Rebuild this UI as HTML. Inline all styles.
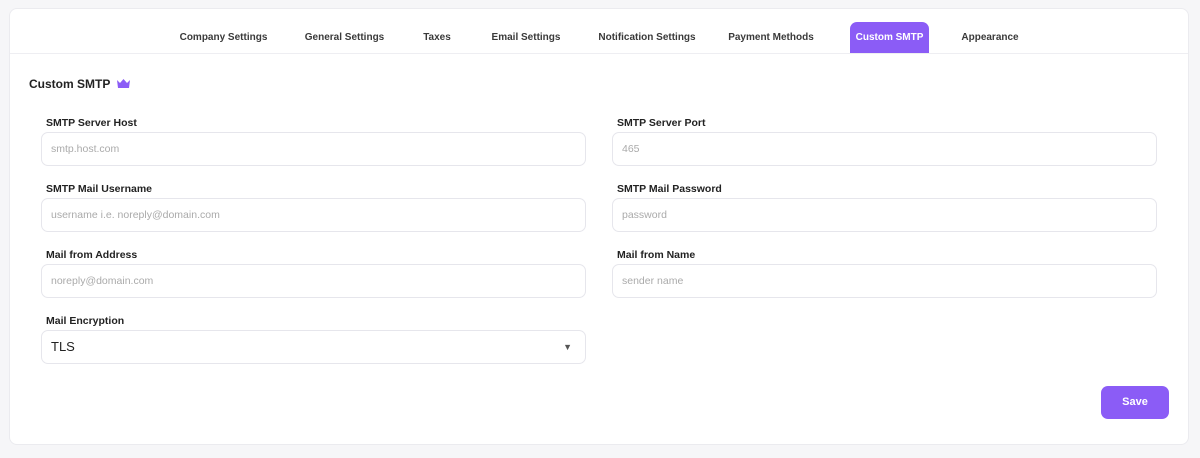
<!DOCTYPE html><html><head><style>
body{margin:0;background:#f6f6f8;font-family:"Liberation Sans",sans-serif;width:1200px;height:458px;overflow:hidden;position:relative}
.card{position:absolute;left:9px;top:8px;width:1180px;height:437px;background:#fff;border:1px solid #ebebef;border-radius:8px;box-sizing:border-box}
.tabs{position:absolute;left:0;top:0;width:100%;height:44px;border-bottom:1px solid #eeeef2}
.tab{position:absolute;top:13px;height:31px;line-height:31px;font-size:10px;font-weight:bold;color:#3a3a3a;text-align:center}
.tab.act{background:#8b5cf6;color:#fff;border-radius:7px 7px 0 0}
.ttl{position:absolute;left:19px;top:68px;font-size:12px;font-weight:bold;color:#222}
.lbl{position:absolute;font-size:10.5px;font-weight:bold;color:#222}
.in{position:absolute;width:545px;height:34px;box-sizing:border-box;border:1px solid #e6e6ec;border-radius:7px;font-size:10.5px;color:#aaa;line-height:32px;padding-left:9px}
.btn{position:absolute;left:1091px;top:377px;width:68px;height:33px;background:#8b5cf6;border-radius:7px;color:#fff;font-size:11px;font-weight:bold;text-align:center;line-height:33px}
</style></head><body><div class="card">
<div class="tabs">
<div class="tab" style="left:161px;width:105px">Company Settings</div>
<div class="tab" style="left:286px;width:97px">General Settings</div>
<div class="tab" style="left:406px;width:42px">Taxes</div>
<div class="tab" style="left:473px;width:86px">Email Settings</div>
<div class="tab" style="left:581px;width:112px">Notification Settings</div>
<div class="tab" style="left:716px;width:90px">Payment Methods</div>
<div class="tab act" style="left:840px;width:79px">Custom SMTP</div>
<div class="tab" style="left:946px;width:68px">Appearance</div>
</div>
<div class="ttl">Custom SMTP <svg width="13" height="10" viewBox="0 0 13 10" style="margin-left:4px;vertical-align:-1px"><path d="M0 1L3 4L6.5 0L10 4L13 1L12 9H1Z" fill="#8b5cf6"/></svg></div>
<div class="lbl" style="left:36px;top:108px">SMTP Server Host</div>
<div class="in" style="left:31px;top:123px">smtp.host.com</div>
<div class="lbl" style="left:607px;top:108px">SMTP Server Port</div>
<div class="in" style="left:602px;top:123px">465</div>
<div class="lbl" style="left:36px;top:174px">SMTP Mail Username</div>
<div class="in" style="left:31px;top:189px">username i.e. noreply@domain.com</div>
<div class="lbl" style="left:607px;top:174px">SMTP Mail Password</div>
<div class="in" style="left:602px;top:189px">password</div>
<div class="lbl" style="left:36px;top:240px">Mail from Address</div>
<div class="in" style="left:31px;top:255px">noreply@domain.com</div>
<div class="lbl" style="left:607px;top:240px">Mail from Name</div>
<div class="in" style="left:602px;top:255px">sender name</div>
<div class="lbl" style="left:36px;top:306px">Mail Encryption</div>
<div class="in" style="left:31px;top:321px;color:#222;font-size:13px">TLS<span style="position:absolute;right:13px;top:0;font-size:9px;color:#555">▼</span></div>
<div class="btn">Save</div>
</div></body></html>
